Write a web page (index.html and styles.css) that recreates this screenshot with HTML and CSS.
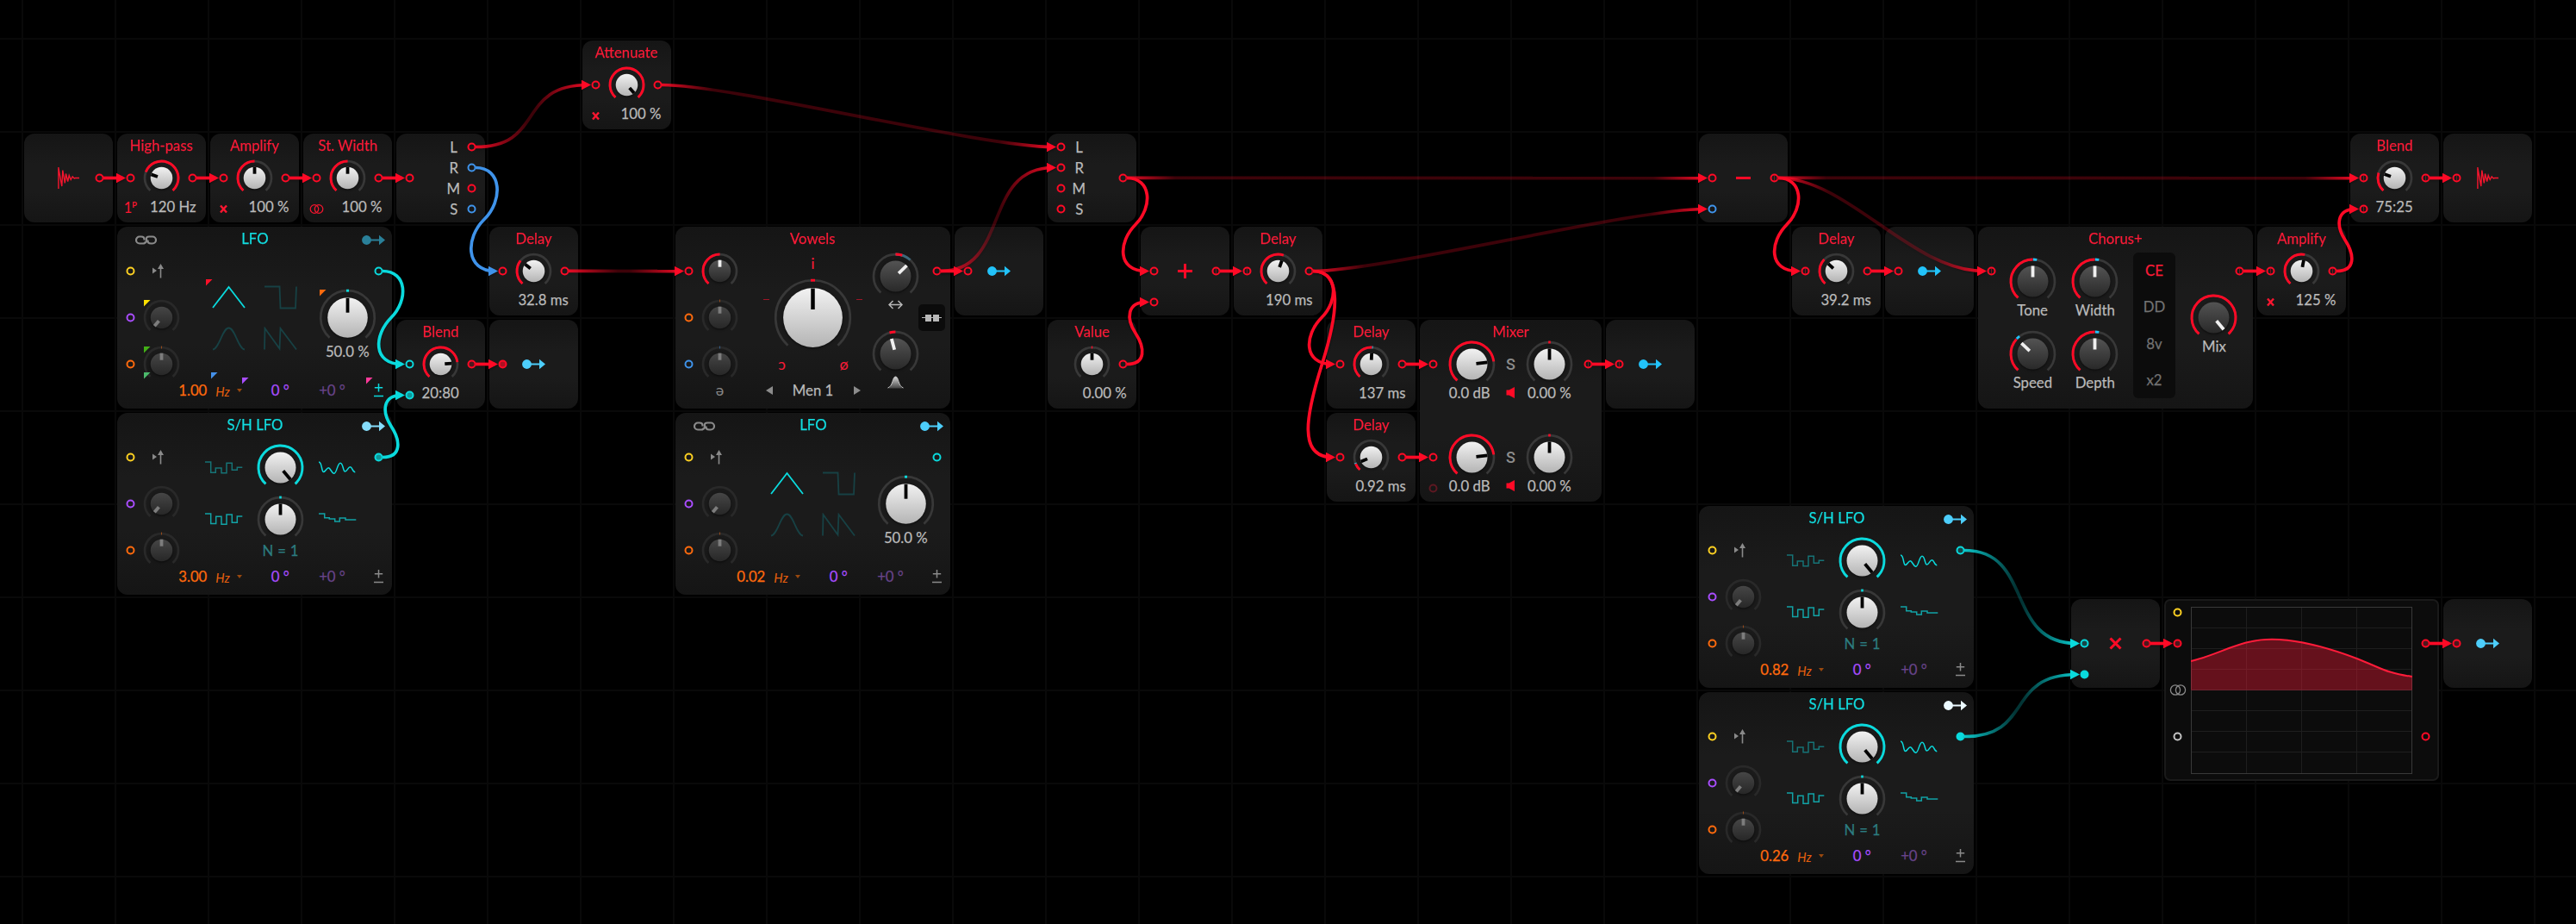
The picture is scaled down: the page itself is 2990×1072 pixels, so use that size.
FILE: index.html
```html
<!DOCTYPE html>
<html lang="en">
<head>
<meta charset="utf-8">
<title>Patch grid</title>
<link rel="stylesheet" href="styles.css">
</head>
<body>
<svg class="defs" aria-hidden="true">
  <defs>
    <linearGradient id="cap-light" x2="0" y2="1"><stop stop-color="#f2f2f2"/><stop offset="1" stop-color="#b4b4b4"/></linearGradient>
    <linearGradient id="cap-dark" x2="0" y2="1"><stop stop-color="#535353"/><stop offset="1" stop-color="#292929"/></linearGradient>
    <linearGradient id="cap-dim" x2="0" y2="1"><stop stop-color="#464646"/><stop offset="1" stop-color="#272727"/></linearGradient>
    <linearGradient id="bell-fill" x2="0" y2="1"><stop stop-color="#d8d8d8"/><stop offset="1" stop-color="#444"/></linearGradient>
  </defs>
  <symbol id="port" viewBox="-5.5 -5.5 11 11"><circle r="4" class="ring"/></symbol>
  <symbol id="port-stereo" viewBox="-5.5 -5.5 11 11"><circle r="4" class="ring"/><path d="M0-3V3" class="split"/></symbol>
  <symbol id="mod" viewBox="0 0 27 13"><circle cx="5.5" cy="6.5" r="5.4"/><path d="M8 5.4H20V.7L27 6.5L20 12.3V7.6H8Z"/></symbol>
  <symbol id="chain" viewBox="0 0 25 11"><path d="M10.5 5.5V4.5Q10.5 1.5 7 1.5H5A4 4 0 0 0 5 9.5H9Q11.5 9.5 11.5 7.5M14.5 5.5V6.5Q14.5 9.5 18 9.5H20A4 4 0 0 0 20 1.5H16Q12.5 1.5 13 4.5V5.5Q13 8.5 10.5 9.2"/></symbol>
  <symbol id="trigger" viewBox="0 0 29 19"><path d="M4 5.5V12.5L9 9Z"/><path d="M12.7 17.5V7H10L13.5 1L17 7H14.3V17.5Z"/></symbol>
  <symbol id="w-tri" viewBox="-1 -1 41 28"><path d="M1 25L19.5 1L38 25"/></symbol>
  <symbol id="w-sqr" viewBox="-1 -1 41 28"><path d="M1 .5H18.5L19.5 25.5H37L38 .5"/></symbol>
  <symbol id="w-sin" viewBox="-1 -1 41 28"><path d="M1 25.5C9 24 12 .5 19.5 .5S30 24 38 25.5"/></symbol>
  <symbol id="w-saw" viewBox="-1 -1 41 28"><path d="M1 25.5L1.5 1L18.5 24.5L19.5 1L38 25.5"/></symbol>
  <symbol id="w-hold" viewBox="-1 -1 45 15"><path d="M0 0H6.7V12.3H12.3V7H19V12.7H25V1.3H31.3V9.3H37.3V6.3H43.3"/></symbol>
  <symbol id="w-alt" viewBox="-1 -1 45 15"><path d="M0 0H6.7V11.5H12.7V3.3H19V12.3H25V1H31.3V10.3H37.3V3H43.3"/></symbol>
  <symbol id="w-smooth" viewBox="-1 -1 45 15"><path d="M0 0C4 0 3 11.5 5.5 11.5C8 11.5 9 6.7 11.3 6.7C13.5 6.7 15 13.3 17.7 13.3C21 13.3 21.5 1.2 25 1.2C28.5 1.2 28 11 30.5 11C33 11 34 5.7 36.5 5.7C39 5.7 39 11.7 42.3 11.7"/></symbol>
  <symbol id="w-decay" viewBox="-1 -1 45 15"><path d="M0 0H6.7V4.7H12.3V6H18.7V9H24.3V5H31V7H43.3"/></symbol>
  <symbol id="plusminus" viewBox="0 0 11 17"><path d="M5.5 1V10.5M.8 5.75H10.2M0 15.5H11"/></symbol>
  <symbol id="audio" viewBox="0 0 25 27"><path d="M.9 1V26M.9 2L4.8 23L5.8 4.5L8.3 19.5L9.5 8.5L11.7 17.5L13.2 10.5L15.2 15.5L17.2 12L19.2 14L20.5 13.5H25"/></symbol>
  <symbol id="cross" viewBox="-4.5 -5.5 9 11"><path d="M-3.5-4L3.5 4M3.5-4L-3.5 4"/></symbol>
  <symbol id="rings" viewBox="-10 -6.5 20 13"><ellipse cx="-3" rx="5.6" ry="5.7"/><ellipse cx="3" rx="5.6" ry="5.7"/></symbol>
  <symbol id="speaker" viewBox="0 0 11 13"><path d="M.5 3.5H3.5L10 0V13L3.5 9.5H.5Z"/></symbol>

  <symbol id="dial-s" viewBox="-21.5 -21.5 43 43"><path class="track" d="M-13.1 14.5A19.5 19.5 0 1 1 13.1 14.5"/><circle class="cap" r="12.8"/></symbol>
  <symbol id="dial-m" viewBox="-27.5 -27.5 55 55"><path class="track" d="M-17.1 19A25.5 25.5 0 1 1 17.1 19"/><circle class="cap" r="18"/></symbol>
  <symbol id="dial-l" viewBox="-33.5 -33.5 67 67"><path class="track" d="M-20.9 23.3A31.3 31.3 0 1 1 20.9 23.3"/><circle class="cap" r="23.3"/></symbol>
  <symbol id="dial-xl" viewBox="-45.5 -45.5 91 91"><path class="track" d="M-29 32.2A43.3 43.3 0 1 1 29 32.2"/><circle class="cap" r="34.4"/></symbol>
</svg>

<main class="canvas">

  <section class="node red" style="--col:0;--row:1">
    <svg class="audio x7 y7"><use href="#audio"/></svg>
    <svg class="port x13 y7"><use href="#port"/></svg>
  </section>

  <section class="node red" style="--col:1;--row:1">
    <h2>High-pass</h2>
    <svg class="port x1 y7"><use href="#port"/></svg>
    <svg class="dial s x7 y7" viewBox="-21.5 -21.5 43 43"><use href="#dial-s" x="-21.5" y="-21.5" width="43" height="43"/><circle class="arc" pathLength="360" stroke-dasharray="207 360" transform="rotate(-159)"/><path class="pin" d="M0-12.8v8" transform="rotate(-71)"/></svg>
    <svg class="port x13 y7"><use href="#port"/></svg>
    <span class="poles x1 y13">1<sup>P</sup></span>
    <span class="value">120 Hz</span>
  </section>

  <section class="node red" style="--col:2;--row:1">
    <h2>Amplify</h2>
    <svg class="port x1 y7"><use href="#port"/></svg>
    <svg class="dial s x7 y7" viewBox="-21.5 -21.5 43 43"><use href="#dial-s" x="-21.5" y="-21.5" width="43" height="43"/><circle class="arc" pathLength="360" stroke-dasharray="138 360" transform="rotate(132)"/><path class="pin" d="M0-12.8v8"/></svg>
    <svg class="port x13 y7"><use href="#port"/></svg>
    <svg class="cross x1 y13"><use href="#cross"/></svg>
    <span class="value">100 %</span>
  </section>

  <section class="node red" style="--col:3;--row:1">
    <h2>St. Width</h2>
    <svg class="port x1 y7"><use href="#port"/></svg>
    <svg class="dial s x7 y7" viewBox="-21.5 -21.5 43 43"><use href="#dial-s" x="-21.5" y="-21.5" width="43" height="43"/><circle class="arc" pathLength="360" stroke-dasharray="138 360" transform="rotate(132)"/><path class="pin" d="M0-12.8v8"/></svg>
    <svg class="port x13 y7"><use href="#port"/></svg>
    <svg class="rings x1 y13"><use href="#rings"/></svg>
    <span class="value">100 %</span>
  </section>

  <section class="node red" style="--col:4;--row:1">
    <svg class="port x1 y7"><use href="#port"/></svg>
    <span class="text x9 w3 y1">L</span><svg class="port x13 y1"><use href="#port"/></svg>
    <span class="text x9 w3 y5">R</span><svg class="port blue x13 y5"><use href="#port"/></svg>
    <span class="text x9 w3 y9">M</span><svg class="port x13 y9"><use href="#port"/></svg>
    <span class="text x9 w3 y13">S</span><svg class="port blue x13 y13"><use href="#port"/></svg>
  </section>

  <section class="node red" style="--col:6;--row:0">
    <h2>Attenuate</h2>
    <svg class="port x1 y7"><use href="#port"/></svg>
    <svg class="dial s x7 y7" viewBox="-21.5 -21.5 43 43"><use href="#dial-s" x="-21.5" y="-21.5" width="43" height="43"/><circle class="arc" pathLength="360" stroke-dasharray="276 360" transform="rotate(132)"/><path class="pin" d="M0-12.8v8" transform="rotate(138)"/></svg>
    <svg class="port x13 y7"><use href="#port"/></svg>
    <svg class="cross x1 y13"><use href="#cross"/></svg>
    <span class="value">100 %</span>
  </section>

  <section class="node red" style="--col:5;--row:2">
    <h2>Delay</h2>
    <svg class="port x1 y7"><use href="#port"/></svg>
    <svg class="dial s x7 y7" viewBox="-21.5 -21.5 43 43"><use href="#dial-s" x="-21.5" y="-21.5" width="43" height="43"/><circle class="arc" pathLength="360" stroke-dasharray="86 360" transform="rotate(132)"/><path class="pin" d="M0-12.8v8" transform="rotate(-52)"/></svg>
    <svg class="port x13 y7"><use href="#port"/></svg>
    <span class="value">32.8 ms</span>
  </section>

  <section class="node wide teal" style="--col:1;--row:2">
    <svg class="chain x4 y1"><use href="#chain"/></svg>
    <h2>LFO</h2>
    <svg class="mod m-faded x48 y1"><use href="#mod"/></svg>
    <svg class="port yellow x1 y7"><use href="#port"/></svg>
    <svg class="trigger x7 y7"><use href="#trigger"/></svg>
    <svg class="port x49 y7"><use href="#port"/></svg>
    <svg class="port purple x1 y16"><use href="#port"/></svg>
    <svg class="dial s dim x7 y16" viewBox="-21.5 -21.5 43 43"><use href="#dial-s" x="-21.5" y="-21.5" width="43" height="43"/><path class="pin" d="M0-12.8v8" transform="rotate(-140)"/></svg>
    <svg class="port orange x1 y25"><use href="#port"/></svg>
    <svg class="dial s dim orange x7 y25" viewBox="-21.5 -21.5 43 43"><use href="#dial-s" x="-21.5" y="-21.5" width="43" height="43"/><path class="tick" d="M0-21v3"/><path class="pin" d="M0-12.8v8"/></svg>
    <svg class="wave on x20 y12"><use href="#w-tri"/></svg>
    <svg class="wave x30 y12"><use href="#w-sqr"/></svg>
    <svg class="wave x20 y20"><use href="#w-sin"/></svg>
    <svg class="wave x30 y20"><use href="#w-saw"/></svg>
    <svg class="dial l x43 y16" viewBox="-33.5 -33.5 67 67"><use href="#dial-l" x="-33.5" y="-33.5" width="67" height="67"/><path class="mark" d="M-1.5-31.3h3"/><path class="pin" d="M0-22.8v17"/></svg>
    <span class="text x43 y22 h3">50.0 %</span>
    <span class="text orange x13 y30">1.00</span>
    <span class="unit x19 y30">Hz</span>
    <i class="drop x22 y30"></i>
    <span class="text purple x30 y30">0 °</span>
    <span class="text faint x40 y30">+0 °</span>
    <svg class="plusminus on x49 y30"><use href="#plusminus"/></svg>
    <svg class="badges" viewBox="0 0 319 211">
      <path fill="#ff1028" d="M103 61h7.500l-7.500 7.500z"/><path fill="#ffe100" d="M31 85h7.500l-7.500 7.500z"/>
      <path fill="#43b016" d="M31 139h7.500l-7.500 7.500z"/><path fill="#4cba6c" d="M31 169h7.500l-7.500 7.500z"/>
      <path fill="#ff6a0d" d="M235 73h7.500l-7.500 7.500z"/><path fill="#4490e8" d="M109 169h7.500l-7.500 7.500z"/>
      <path fill="#a94dff" d="M145 175h7.500l-7.500 7.500z"/><path fill="#ff3a9a" d="M289 175h7.500l-7.500 7.500z"/>
    </svg>
  </section>

  <section class="node wide teal" style="--col:1;--row:4">
    <h2>S/H LFO</h2>
    <svg class="mod m-pale x48 y1"><use href="#mod"/></svg>
    <svg class="port yellow x1 y7"><use href="#port"/></svg>
    <svg class="trigger x7 y7"><use href="#trigger"/></svg>
    <svg class="port half x49 y7"><use href="#port"/></svg>
    <svg class="port purple x1 y16"><use href="#port"/></svg>
    <svg class="dial s dim x7 y16" viewBox="-21.5 -21.5 43 43"><use href="#dial-s" x="-21.5" y="-21.5" width="43" height="43"/><path class="pin" d="M0-12.8v8" transform="rotate(-140)"/></svg>
    <svg class="port orange x1 y25"><use href="#port"/></svg>
    <svg class="dial s dim orange x7 y25" viewBox="-21.5 -21.5 43 43"><use href="#dial-s" x="-21.5" y="-21.5" width="43" height="43"/><path class="tick" d="M0-21v3"/><path class="pin" d="M0-12.8v8"/></svg>
    <svg class="step low x19 y9"><use href="#w-hold"/></svg>
    <svg class="step x41 y9 on"><use href="#w-smooth"/></svg>
    <svg class="step x19 y19"><use href="#w-alt"/></svg>
    <svg class="step x41 y19"><use href="#w-decay"/></svg>
    <svg class="dial m x30 y9" viewBox="-27.5 -27.5 55 55"><use href="#dial-m" x="-27.5" y="-27.5" width="55" height="55"/><circle class="arc" pathLength="360" stroke-dasharray="276 360" transform="rotate(132)"/><path class="pin" d="M0-18v13" transform="rotate(140)"/></svg>
    <svg class="dial m x30 y19" viewBox="-27.5 -27.5 55 55"><use href="#dial-m" x="-27.5" y="-27.5" width="55" height="55"/><path class="mark" d="M-1.3-25.5h2.6"/><path class="pin" d="M0-18v13"/></svg>
    <span class="text steps x30 y25">N = 1</span>
    <span class="text orange x13 y30">3.00</span>
    <span class="unit x19 y30">Hz</span>
    <i class="drop x22 y30"></i>
    <span class="text purple x30 y30">0 °</span>
    <span class="text faint x40 y30">+0 °</span>
    <svg class="plusminus x49 y30"><use href="#plusminus"/></svg>
  </section>

  <section class="node red" style="--col:4;--row:3">
    <h2>Blend</h2>
    <svg class="port teal x1 y7"><use href="#port"/></svg>
    <svg class="port teal half x1 y13"><use href="#port"/></svg>
    <svg class="dial s x7 y7" viewBox="-21.5 -21.5 43 43"><use href="#dial-s" x="-21.5" y="-21.5" width="43" height="43"/><circle class="arc" pathLength="360" stroke-dasharray="221 360" transform="rotate(132)"/><path class="pin" d="M0-12.8v8" transform="rotate(86)"/></svg>
    <svg class="port tint x13 y7"><use href="#port"/></svg>
    <span class="text x7 y12 h3">20:80</span>
  </section>

  <section class="node red" style="--col:5;--row:3">
    <svg class="port half x1 y7"><use href="#port"/></svg>
    <svg class="mod m-sky x7 y7"><use href="#mod"/></svg>
  </section>

  <section class="node wide red" style="--col:7;--row:2">
    <h2>Vowels</h2>
    <svg class="port x1 y7"><use href="#port"/></svg>
    <svg class="dial s dark x7 y7" viewBox="-21.5 -21.5 43 43"><use href="#dial-s" x="-21.5" y="-21.5" width="43" height="43"/><circle class="arc" pathLength="360" stroke-dasharray="138 360" transform="rotate(132)"/><path class="pin" d="M0-12.8v8"/></svg>
    <svg class="port orange x1 y16"><use href="#port"/></svg>
    <svg class="dial s dim orange x7 y16" viewBox="-21.5 -21.5 43 43"><use href="#dial-s" x="-21.5" y="-21.5" width="43" height="43"/><path class="tick" d="M0-21v3"/><path class="pin" d="M0-12.8v8"/></svg>
    <svg class="port blue x1 y25"><use href="#port"/></svg>
    <svg class="dial s dim blue x7 y25" viewBox="-21.5 -21.5 43 43"><use href="#dial-s" x="-21.5" y="-21.5" width="43" height="43"/><path class="tick" d="M0-21v3"/><path class="pin" d="M0-12.8v8"/></svg>
    <span class="vowel grey x7 y30">ə</span>
    <span class="vowel x25 y5 h3">i</span>
    <i class="dash x16 y12 h3"></i>
    <i class="dash x34 y12 h3"></i>
    <svg class="dial xl x25 y16" viewBox="-45.5 -45.5 91 91"><use href="#dial-xl" x="-45.5" y="-45.5" width="91" height="91"/><path class="mark" d="M-2.5-43.3h5"/><path class="pin" d="M0-34v24.5"/></svg>
    <span class="vowel x19 y25">ɔ</span>
    <span class="vowel x31 y25">ø</span>
    <i class="prev x16 w3 y30"></i>
    <span class="text x25 y30">Men 1</span>
    <i class="next x33 w3 y30"></i>
    <svg class="dial m dark x41 y8" viewBox="-27.5 -27.5 55 55"><use href="#dial-m" x="-27.5" y="-27.5" width="55" height="55"/><circle class="arc modulated" pathLength="360" stroke-dasharray="42 360" transform="rotate(-90)"/><circle class="arc" pathLength="360" stroke-dasharray="18 360" transform="rotate(-90)"/><path class="pin" d="M0-18v13" transform="rotate(46)"/></svg>
    <svg class="spread x41 y13 h3" viewBox="0 0 17 11"><path d="M5.5 1L1 5.5L5.5 10M11.5 1L16 5.5L11.5 10M2 5.5H15"/></svg>
    <svg class="dial m dark x41 y23" viewBox="-27.5 -27.5 55 55"><use href="#dial-m" x="-27.5" y="-27.5" width="55" height="55"/><circle class="arc" pathLength="360" stroke-dasharray="16 360" transform="rotate(-106)"/><path class="pin" d="M0-18v13" transform="rotate(-15)"/></svg>
    <svg class="bell x41 y28 h3" viewBox="0 0 19 15"><path d="M0 14.5C7 13.5 5.5 1 9.5 1S12 13.5 19 14.5Z" fill="url(#bell-fill)"/><path d="M.5 14C7 12 5.5 1 9.5 1S12 12 18.5 14" fill="none" stroke="#c8c8c8"/></svg>
    <svg class="port x49 y7"><use href="#port"/></svg>
    <span class="series x48 y16"><i></i><i></i></span>
  </section>

  <section class="node red" style="--col:10;--row:2">
    <svg class="port x1 y7"><use href="#port"/></svg>
    <svg class="mod x7 y7"><use href="#mod"/></svg>
  </section>

  <section class="node wide teal" style="--col:7;--row:4">
    <svg class="chain x4 y1"><use href="#chain"/></svg>
    <h2>LFO</h2>
    <svg class="mod m-sky x48 y1"><use href="#mod"/></svg>
    <svg class="port yellow x1 y7"><use href="#port"/></svg>
    <svg class="trigger x7 y7"><use href="#trigger"/></svg>
    <svg class="port x49 y7"><use href="#port"/></svg>
    <svg class="port purple x1 y16"><use href="#port"/></svg>
    <svg class="dial s dim x7 y16" viewBox="-21.5 -21.5 43 43"><use href="#dial-s" x="-21.5" y="-21.5" width="43" height="43"/><path class="pin" d="M0-12.8v8" transform="rotate(-140)"/></svg>
    <svg class="port orange x1 y25"><use href="#port"/></svg>
    <svg class="dial s dim orange x7 y25" viewBox="-21.5 -21.5 43 43"><use href="#dial-s" x="-21.5" y="-21.5" width="43" height="43"/><path class="tick" d="M0-21v3"/><path class="pin" d="M0-12.8v8"/></svg>
    <svg class="wave on x20 y12"><use href="#w-tri"/></svg>
    <svg class="wave x30 y12"><use href="#w-sqr"/></svg>
    <svg class="wave x20 y20"><use href="#w-sin"/></svg>
    <svg class="wave x30 y20"><use href="#w-saw"/></svg>
    <svg class="dial l x43 y16" viewBox="-33.5 -33.5 67 67"><use href="#dial-l" x="-33.5" y="-33.5" width="67" height="67"/><path class="mark" d="M-1.5-31.3h3"/><path class="pin" d="M0-22.8v17"/></svg>
    <span class="text x43 y22 h3">50.0 %</span>
    <span class="text orange x13 y30">0.02</span>
    <span class="unit x19 y30">Hz</span>
    <i class="drop x22 y30"></i>
    <span class="text purple x30 y30">0 °</span>
    <span class="text faint x40 y30">+0 °</span>
    <svg class="plusminus x49 y30"><use href="#plusminus"/></svg>
  </section>

  <section class="node red" style="--col:11;--row:1">
    <svg class="port x1 y1"><use href="#port"/></svg><span class="text x4 w3 y1">L</span>
    <svg class="port x1 y5"><use href="#port"/></svg><span class="text x4 w3 y5">R</span>
    <svg class="port x1 y9"><use href="#port"/></svg><span class="text x4 w3 y9">M</span>
    <svg class="port x1 y13"><use href="#port"/></svg><span class="text x4 w3 y13">S</span>
    <svg class="port x13 y7"><use href="#port"/></svg>
  </section>

  <section class="node red" style="--col:11;--row:3">
    <h2>Value</h2>
    <svg class="dial s x7 y7" viewBox="-21.5 -21.5 43 43"><use href="#dial-s" x="-21.5" y="-21.5" width="43" height="43"/><path class="mark" d="M-.7-19.5h1.4"/><path class="pin" d="M0-12.8v8"/></svg>
    <svg class="port x13 y7"><use href="#port"/></svg>
    <span class="value">0.00 %</span>
  </section>

  <section class="node red" style="--col:12;--row:2">
    <svg class="port x1 y7"><use href="#port"/></svg>
    <svg class="port x1 y13"><use href="#port"/></svg>
    <svg class="math x7 y7" viewBox="-8.5 -8.5 17 17"><path d="M-8.5 0H8.5M0-8.5V8.5"/></svg>
    <svg class="port x13 y7"><use href="#port-stereo"/></svg>
  </section>

  <section class="node red" style="--col:13;--row:2">
    <h2>Delay</h2>
    <svg class="port x1 y7"><use href="#port-stereo"/></svg>
    <svg class="dial s x7 y7" viewBox="-21.5 -21.5 43 43"><use href="#dial-s" x="-21.5" y="-21.5" width="43" height="43"/><circle class="arc" pathLength="360" stroke-dasharray="157 360" transform="rotate(132)"/><path class="pin" d="M0-12.8v8" transform="rotate(20)"/></svg>
    <svg class="port x13 y7"><use href="#port"/></svg>
    <span class="value">190 ms</span>
  </section>

  <section class="node red" style="--col:14;--row:3">
    <h2>Delay</h2>
    <svg class="port x1 y7"><use href="#port"/></svg>
    <svg class="dial s x7 y7" viewBox="-21.5 -21.5 43 43"><use href="#dial-s" x="-21.5" y="-21.5" width="43" height="43"/><circle class="arc" pathLength="360" stroke-dasharray="141 360" transform="rotate(132)"/><path class="mod-tick" d="M0-21v3" transform="rotate(5)"/><path class="pin" d="M0-12.8v8" transform="rotate(3)"/></svg>
    <svg class="port x13 y7"><use href="#port"/></svg>
    <span class="value">137 ms</span>
  </section>

  <section class="node red" style="--col:14;--row:4">
    <h2>Delay</h2>
    <svg class="port x1 y7"><use href="#port"/></svg>
    <svg class="dial s x7 y7" viewBox="-21.5 -21.5 43 43"><use href="#dial-s" x="-21.5" y="-21.5" width="43" height="43"/><circle class="arc" pathLength="360" stroke-dasharray="25 360" transform="rotate(132)"/><path class="mod-tick" d="M0-21v3" transform="rotate(-111)"/><path class="pin" d="M0-12.8v8" transform="rotate(-113)"/></svg>
    <svg class="port x13 y7"><use href="#port"/></svg>
    <span class="value">0.92 ms</span>
  </section>

  <section class="node square red" style="--col:15;--row:3">
    <h2>Mixer</h2>
    <svg class="port x1 y7"><use href="#port"/></svg>
    <svg class="dial m x8 w3 y7" viewBox="-27.5 -27.5 55 55"><use href="#dial-m" x="-27.5" y="-27.5" width="55" height="55"/><circle class="arc" pathLength="360" stroke-dasharray="221 360" transform="rotate(132)"/><path class="pin" d="M0-18v13" transform="rotate(83)"/></svg>
    <span class="solo x16 y7">S</span>
    <svg class="dial m x23 w3 y7" viewBox="-27.5 -27.5 55 55"><use href="#dial-m" x="-27.5" y="-27.5" width="55" height="55"/><path class="mark" d="M-1.3-25.5h2.6"/><path class="pin" d="M0-18v13"/></svg>
    <svg class="port x31 y7"><use href="#port-stereo"/></svg>
    <span class="text x8 y12 h3">0.0 dB</span>
    <svg class="speaker x16 y12 h3"><use href="#speaker"/></svg>
    <span class="text x23 w3 y12 h3">0.00 %</span>
    <svg class="port x1 y25"><use href="#port"/></svg>
    <svg class="dial m x8 w3 y25" viewBox="-27.5 -27.5 55 55"><use href="#dial-m" x="-27.5" y="-27.5" width="55" height="55"/><circle class="arc" pathLength="360" stroke-dasharray="221 360" transform="rotate(132)"/><path class="pin" d="M0-18v13" transform="rotate(83)"/></svg>
    <span class="solo x16 y25">S</span>
    <svg class="dial m x23 w3 y25" viewBox="-27.5 -27.5 55 55"><use href="#dial-m" x="-27.5" y="-27.5" width="55" height="55"/><path class="mark" d="M-1.3-25.5h2.6"/><path class="pin" d="M0-18v13"/></svg>
    <svg class="port spare x1 y31"><use href="#port"/></svg>
    <span class="text x8 y30 h3">0.0 dB</span>
    <svg class="speaker x16 y30 h3"><use href="#speaker"/></svg>
    <span class="text x23 w3 y30 h3">0.00 %</span>
  </section>

  <section class="node red" style="--col:17;--row:3">
    <svg class="port x1 y7"><use href="#port-stereo"/></svg>
    <svg class="mod x7 y7"><use href="#mod"/></svg>
  </section>

  <section class="node red" style="--col:18;--row:1">
    <svg class="port x1 y7"><use href="#port"/></svg>
    <svg class="port blue x1 y13"><use href="#port"/></svg>
    <svg class="math x7 y7" viewBox="-8.5 -8.5 17 17"><path d="M-8.5 0H8.5"/></svg>
    <svg class="port x13 y7"><use href="#port-stereo"/></svg>
  </section>

  <section class="node red" style="--col:19;--row:2">
    <h2>Delay</h2>
    <svg class="port x1 y7"><use href="#port-stereo"/></svg>
    <svg class="dial s x7 y7" viewBox="-21.5 -21.5 43 43"><use href="#dial-s" x="-21.5" y="-21.5" width="43" height="43"/><circle class="arc" pathLength="360" stroke-dasharray="92 360" transform="rotate(132)"/><path class="pin" d="M0-12.8v8" transform="rotate(-48)"/></svg>
    <svg class="port x13 y7"><use href="#port"/></svg>
    <span class="value">39.2 ms</span>
  </section>

  <section class="node red" style="--col:20;--row:2">
    <svg class="port x1 y7"><use href="#port"/></svg>
    <svg class="mod x7 y7"><use href="#mod"/></svg>
  </section>

  <section class="node wide red" style="--col:21;--row:2">
    <h2>Chorus+</h2>
    <svg class="port x1 y7"><use href="#port-stereo"/></svg>
    <svg class="dial m dark x9 y9" viewBox="-27.5 -27.5 55 55"><use href="#dial-m" x="-27.5" y="-27.5" width="55" height="55"/><circle class="arc" pathLength="360" stroke-dasharray="138 360" transform="rotate(132)"/><circle class="arc sky" pathLength="360" stroke-dasharray="10 360" transform="rotate(-89)"/><path class="pin" d="M0-18v13"/></svg>
    <span class="text x9 y14 h3">Tone</span>
    <svg class="dial m dark x21 y9" viewBox="-27.5 -27.5 55 55"><use href="#dial-m" x="-27.5" y="-27.5" width="55" height="55"/><circle class="arc" pathLength="360" stroke-dasharray="138 360" transform="rotate(132)"/><circle class="arc sky" pathLength="360" stroke-dasharray="10 360" transform="rotate(-89)"/><path class="pin" d="M0-18v13"/></svg>
    <span class="text x21 y14 h3">Width</span>
    <svg class="dial m dark x9 y23" viewBox="-27.5 -27.5 55 55"><use href="#dial-m" x="-27.5" y="-27.5" width="55" height="55"/><circle class="arc" pathLength="360" stroke-dasharray="90 360" transform="rotate(132)"/><circle class="arc sky" pathLength="360" stroke-dasharray="10 360" transform="rotate(-137)"/><path class="pin" d="M0-18v13" transform="rotate(-47)"/></svg>
    <span class="text x9 y28 h3">Speed</span>
    <svg class="dial m dark x21 y23" viewBox="-27.5 -27.5 55 55"><use href="#dial-m" x="-27.5" y="-27.5" width="55" height="55"/><circle class="arc" pathLength="360" stroke-dasharray="138 360" transform="rotate(132)"/><circle class="arc sky" pathLength="360" stroke-dasharray="10 360" transform="rotate(-89)"/><path class="pin" d="M0-18v13"/></svg>
    <span class="text x21 y28 h3">Depth</span>
    <ul class="modes x32 w3 y17 h3">
      <li class="active">CE</li>
      <li>DD</li>
      <li>8v</li>
      <li>x2</li>
    </ul>
    <svg class="dial m dark x44 y16" viewBox="-27.5 -27.5 55 55"><use href="#dial-m" x="-27.5" y="-27.5" width="55" height="55"/><circle class="arc" pathLength="360" stroke-dasharray="276 360" transform="rotate(132)"/><path class="pin" d="M0-18v13" transform="rotate(140)"/></svg>
    <span class="text x44 y21 h3">Mix</span>
    <svg class="port x49 y7"><use href="#port-stereo"/></svg>
  </section>

  <section class="node red" style="--col:24;--row:2">
    <h2>Amplify</h2>
    <svg class="port x1 y7"><use href="#port-stereo"/></svg>
    <svg class="dial s x7 y7" viewBox="-21.5 -21.5 43 43"><use href="#dial-s" x="-21.5" y="-21.5" width="43" height="43"/><circle class="arc" pathLength="360" stroke-dasharray="149 360" transform="rotate(132)"/><path class="pin" d="M0-12.8v8" transform="rotate(11)"/></svg>
    <svg class="port x13 y7"><use href="#port-stereo"/></svg>
    <svg class="cross x1 y13"><use href="#cross"/></svg>
    <span class="value">125 %</span>
  </section>

  <section class="node red" style="--col:25;--row:1">
    <h2>Blend</h2>
    <svg class="port x1 y7"><use href="#port-stereo"/></svg>
    <svg class="port x1 y13"><use href="#port-stereo"/></svg>
    <svg class="dial s x7 y7" viewBox="-21.5 -21.5 43 43"><use href="#dial-s" x="-21.5" y="-21.5" width="43" height="43"/><circle class="arc" pathLength="360" stroke-dasharray="66 360" transform="rotate(132)"/><path class="pin" d="M0-12.8v8" transform="rotate(-69)"/></svg>
    <svg class="port x13 y7"><use href="#port-stereo"/></svg>
    <span class="text x7 y12 h3">75:25</span>
  </section>

  <section class="node red" style="--col:26;--row:1">
    <svg class="port x1 y7"><use href="#port-stereo"/></svg>
    <svg class="audio x7 y7"><use href="#audio"/></svg>
  </section>

  <section class="node wide teal" style="--col:18;--row:5">
    <h2>S/H LFO</h2>
    <svg class="mod m-sky x48 y1"><use href="#mod"/></svg>
    <svg class="port yellow x1 y7"><use href="#port"/></svg>
    <svg class="trigger x7 y7"><use href="#trigger"/></svg>
    <svg class="port tint x49 y7"><use href="#port"/></svg>
    <svg class="port purple x1 y16"><use href="#port"/></svg>
    <svg class="dial s dim x7 y16" viewBox="-21.5 -21.5 43 43"><use href="#dial-s" x="-21.5" y="-21.5" width="43" height="43"/><path class="pin" d="M0-12.8v8" transform="rotate(-140)"/></svg>
    <svg class="port orange x1 y25"><use href="#port"/></svg>
    <svg class="dial s dim orange x7 y25" viewBox="-21.5 -21.5 43 43"><use href="#dial-s" x="-21.5" y="-21.5" width="43" height="43"/><path class="tick" d="M0-21v3"/><path class="pin" d="M0-12.8v8"/></svg>
    <svg class="step low x19 y9"><use href="#w-hold"/></svg>
    <svg class="step x41 y9 on"><use href="#w-smooth"/></svg>
    <svg class="step x19 y19"><use href="#w-alt"/></svg>
    <svg class="step x41 y19"><use href="#w-decay"/></svg>
    <svg class="dial m x30 y9" viewBox="-27.5 -27.5 55 55"><use href="#dial-m" x="-27.5" y="-27.5" width="55" height="55"/><circle class="arc" pathLength="360" stroke-dasharray="276 360" transform="rotate(132)"/><path class="pin" d="M0-18v13" transform="rotate(140)"/></svg>
    <svg class="dial m x30 y19" viewBox="-27.5 -27.5 55 55"><use href="#dial-m" x="-27.5" y="-27.5" width="55" height="55"/><path class="mark" d="M-1.3-25.5h2.6"/><path class="pin" d="M0-18v13"/></svg>
    <span class="text steps x30 y25">N = 1</span>
    <span class="text orange x13 y30">0.82</span>
    <span class="unit x19 y30">Hz</span>
    <i class="drop x22 y30"></i>
    <span class="text purple x30 y30">0 °</span>
    <span class="text faint x40 y30">+0 °</span>
    <svg class="plusminus x49 y30"><use href="#plusminus"/></svg>
  </section>

  <section class="node wide teal" style="--col:18;--row:7">
    <h2>S/H LFO</h2>
    <svg class="mod m-white x48 y1"><use href="#mod"/></svg>
    <svg class="port yellow x1 y7"><use href="#port"/></svg>
    <svg class="trigger x7 y7"><use href="#trigger"/></svg>
    <svg class="port full x49 y7"><use href="#port"/></svg>
    <svg class="port purple x1 y16"><use href="#port"/></svg>
    <svg class="dial s dim x7 y16" viewBox="-21.5 -21.5 43 43"><use href="#dial-s" x="-21.5" y="-21.5" width="43" height="43"/><path class="pin" d="M0-12.8v8" transform="rotate(-140)"/></svg>
    <svg class="port orange x1 y25"><use href="#port"/></svg>
    <svg class="dial s dim orange x7 y25" viewBox="-21.5 -21.5 43 43"><use href="#dial-s" x="-21.5" y="-21.5" width="43" height="43"/><path class="tick" d="M0-21v3"/><path class="pin" d="M0-12.8v8"/></svg>
    <svg class="step low x19 y9"><use href="#w-hold"/></svg>
    <svg class="step x41 y9 on"><use href="#w-smooth"/></svg>
    <svg class="step x19 y19"><use href="#w-alt"/></svg>
    <svg class="step x41 y19"><use href="#w-decay"/></svg>
    <svg class="dial m x30 y9" viewBox="-27.5 -27.5 55 55"><use href="#dial-m" x="-27.5" y="-27.5" width="55" height="55"/><circle class="arc" pathLength="360" stroke-dasharray="276 360" transform="rotate(132)"/><path class="pin" d="M0-18v13" transform="rotate(140)"/></svg>
    <svg class="dial m x30 y19" viewBox="-27.5 -27.5 55 55"><use href="#dial-m" x="-27.5" y="-27.5" width="55" height="55"/><path class="mark" d="M-1.3-25.5h2.6"/><path class="pin" d="M0-18v13"/></svg>
    <span class="text steps x30 y25">N = 1</span>
    <span class="text orange x13 y30">0.26</span>
    <span class="unit x19 y30">Hz</span>
    <i class="drop x22 y30"></i>
    <span class="text purple x30 y30">0 °</span>
    <span class="text faint x40 y30">+0 °</span>
    <svg class="plusminus x49 y30"><use href="#plusminus"/></svg>
  </section>

  <section class="node red" style="--col:22;--row:6">
    <svg class="port teal tint x1 y7"><use href="#port"/></svg>
    <svg class="port teal full x1 y13"><use href="#port"/></svg>
    <svg class="math x7 y7" viewBox="-8.5 -8.5 17 17"><path d="M-6-6L6 6M6-6L-6 6"/></svg>
    <svg class="port tint x13 y7"><use href="#port"/></svg>
  </section>

  <section class="node wide scope red" style="--col:23;--row:6">
    <svg class="port yellow x1 y1"><use href="#port"/></svg>
    <svg class="port tint x1 y7"><use href="#port"/></svg>
    <svg class="rings large x1 y16"><use href="#rings"/></svg>
    <svg class="port white x1 y25"><use href="#port"/></svg>
    <svg class="plot x25 y16" viewBox="0 0 257 194">
      <path class="lines" d="M64.5 0V194M128.5 0V194M192.5 0V194M0 24.5H257M0 48.5H257M0 72.5H257M0 120.5H257M0 144.5H257M0 168.5H257"/>
      <rect class="frame" x=".5" y=".5" width="256" height="193"/>
      <path class="fill" d="M0 63C26 57 46 45 70 40.3C84 37 95 37 112 38.8C140 42 170 51.5 192.5 60C212 67.5 220 72.5 232 75.8C242 79 250 80 257 81V96.5H0Z"/>
      <path class="zero" d="M0 96.5H257"/>
      <path class="curve" d="M0 63C26 57 46 45 70 40.3C84 37 95 37 112 38.8C140 42 170 51.5 192.5 60C212 67.5 220 72.5 232 75.8C242 79 250 80 257 81"/>
    </svg>
    <svg class="port tint x49 y7"><use href="#port"/></svg>
    <svg class="port x49 y25"><use href="#port"/></svg>
  </section>

  <section class="node red" style="--col:26;--row:6">
    <svg class="port tint x1 y7"><use href="#port"/></svg>
    <svg class="mod m-sky x7 y7"><use href="#mod"/></svg>
  </section>

  <svg class="wires" viewBox="0 0 2990 1072">
    <defs>
      <marker id="tip-red" markerUnits="userSpaceOnUse" markerWidth="12" markerHeight="12" refX="7.5" refY="6" orient="0"><path d="M0 .3L11 6L0 11.7Z" fill="#ff0a26"/></marker>
      <marker id="tip-teal" markerUnits="userSpaceOnUse" markerWidth="12" markerHeight="12" refX="7.5" refY="6" orient="0"><path d="M0 .3L11 6L0 11.7Z" fill="#0adadd"/></marker>
      <marker id="tip-blue" markerUnits="userSpaceOnUse" markerWidth="12" markerHeight="12" refX="7.5" refY="6" orient="0"><path d="M0 .3L11 6L0 11.7Z" fill="#3f93ea"/></marker>
      <linearGradient id="f-att-in" gradientUnits="userSpaceOnUse" x1="547" y1="0" x2="685" y2="0"><stop class="e"/><stop class="c" offset=".47"/><stop class="c" offset=".53"/><stop class="e" offset="1"/></linearGradient>
      <linearGradient id="f-att-out" gradientUnits="userSpaceOnUse" x1="763" y1="0" x2="1224" y2="0"><stop class="e"/><stop class="c" offset=".14"/><stop class="c" offset=".86"/><stop class="e" offset="1"/></linearGradient>
      <linearGradient id="f-delay" gradientUnits="userSpaceOnUse" x1="655" y1="0" x2="793" y2="0"><stop class="e"/><stop class="c" offset=".45"/><stop class="c" offset=".55"/><stop class="e" offset="1"/></linearGradient>
      <linearGradient id="f-vowels" gradientUnits="userSpaceOnUse" x1="1087" y1="0" x2="1224" y2="0"><stop class="e"/><stop class="c" offset=".47"/><stop class="c" offset=".53"/><stop class="e" offset="1"/></linearGradient>
      <linearGradient id="f-merge" gradientUnits="userSpaceOnUse" x1="1303" y1="0" x2="1980" y2="0"><stop class="e"/><stop class="c" offset=".09"/><stop class="c" offset=".91"/><stop class="e" offset="1"/></linearGradient>
      <linearGradient id="f-sub" gradientUnits="userSpaceOnUse" x1="1519" y1="0" x2="1980" y2="0"><stop class="e"/><stop class="c" offset=".14"/><stop class="c" offset=".86"/><stop class="e" offset="1"/></linearGradient>
      <linearGradient id="f-dry" gradientUnits="userSpaceOnUse" x1="2059" y1="0" x2="2736" y2="0"><stop class="e"/><stop class="c" offset=".09"/><stop class="c" offset=".91"/><stop class="e" offset="1"/></linearGradient>
      <linearGradient id="f-chorus" gradientUnits="userSpaceOnUse" x1="2059" y1="0" x2="2304" y2="0"><stop class="e"/><stop class="c" offset=".26"/><stop class="c" offset=".74"/><stop class="e" offset="1"/></linearGradient>
      <linearGradient id="f-mult" gradientUnits="userSpaceOnUse" x1="2275" y1="0" x2="2412" y2="0"><stop class="te"/><stop class="tc" offset=".47"/><stop class="tc" offset=".53"/><stop class="te" offset="1"/></linearGradient>
    </defs>
    <g marker-end="url(#tip-red)">
      <path stroke="url(#f-att-in)" d="M552 170.5C633 170.5 599 98.5 682.5 98.5"/>
      <path stroke="url(#f-att-out)" d="M768 98.5C850 98.5 1138 170.5 1222.5 170.5"/>
      <path stroke="url(#f-delay)" d="M660 314.4L790.5 314.6"/>
      <path stroke="url(#f-vowels)" d="M1092 314.5C1173 314.5 1139 194.5 1222.5 194.5"/>
      <path stroke="url(#f-merge)" d="M1308 206.4L1978.5 206.6"/>
      <path stroke="url(#f-sub)" d="M1524 314.5C1606 314.5 1894 242.5 1978.5 242.5"/>
      <path stroke="url(#f-dry)" d="M2064 206.4L2734.5 206.6"/>
      <path stroke="url(#f-chorus)" d="M2064 206.5C2145 206.5 2218 314.5 2302.5 314.5"/>
    </g>
    <g stroke="#0adadd" marker-end="url(#tip-teal)">
      <path stroke="url(#f-mult)" d="M2280 638.5C2361 638.5 2327 746.5 2410.5 746.5"/>
      <path stroke="url(#f-mult)" d="M2280 854.5C2361 854.5 2327 782.5 2410.5 782.5"/>
      <path d="M444 314.5C473 314.5 474 348.5 454 368.5S432 422.5 466.5 422.5"/>
      <path d="M444 530.5C466.5 530.5 465 511.5 454 494.5S444 458.5 466.5 458.5"/>
    </g>
    <path stroke="#3f93ea" marker-end="url(#tip-blue)" d="M552 194.5C583 194.5 584 233 562 254.5S540 314.5 574.5 314.5"/>
    <g stroke="#ff0a26" marker-end="url(#tip-red)">
      <path d="M120 206.5H142.5"/><path d="M228 206.5H250.5"/><path d="M336 206.5H358.5"/><path d="M444 206.5H466.5"/>
      <path d="M552 422.5H574.5"/><path d="M1092 314.5H1114.5"/>
      <path d="M1308 206.5C1337 206.5 1338 240.5 1318 260.5S1296 314.5 1330.5 314.5"/>
      <path d="M1308 422.5C1330.5 422.5 1329 403.5 1318 386.5S1308 350.5 1330.5 350.5"/>
      <path d="M1416 314.5H1438.5"/>
      <path d="M1524 314.5C1559 314.5 1553 364 1534.5 422.5S1506 530.5 1546.5 530.5"/>
      <path d="M1524 314.5C1553 314.5 1554 348.5 1534 368.5S1512 422.5 1546.5 422.5"/>
      <path d="M1632 422.5H1654.5"/><path d="M1632 530.5H1654.5"/><path d="M1848 422.5H1870.5"/>
      <path d="M2064 206.5C2093 206.5 2094 240.5 2074 260.5S2052 314.5 2086.5 314.5"/>
      <path d="M2172 314.5H2194.5"/><path d="M2604 314.5H2626.5"/>
      <path d="M2712 314.5C2734.5 314.5 2733 295.5 2722 278.5S2712 242.5 2734.5 242.5"/>
      <path d="M2820 206.5H2842.5"/><path d="M2496 746.5H2518.5"/><path d="M2820 746.5H2842.5"/>
    </g>
  </svg>
</main>
</body>
</html>
```
FILE: styles.css
```css
:root {
  --red: #ff0a26;
  --teal: #0adadd;
  --blue: #3f93ea;
  --orange: #ff6a0d;
  --purple: #a94dff;
  --yellow: #fdd022;
  --label: #bababa;
}

* { box-sizing: border-box; }

html { height: 1072px; overflow: hidden; }

body {
  margin: 0;
  background: #000;
  font-family: Lato, Carlito, "Noto Sans", sans-serif;
  font-size: 18px;
  line-height: 22px;
}

.defs { position: absolute; width: 0; height: 0; }

.canvas {
  position: relative;
  width: 2990px;
  height: 1072px;
  overflow: hidden;
  background-image:
    linear-gradient(90deg, #090909 2px, transparent 2px),
    linear-gradient(#090909 2px, transparent 2px);
  background-size: 108px 108px;
  background-position: 25px 0, 0 44px;
}

/* A node snaps to the 108px canvas grid; inside, it has a 6px grid of its own. */
.node {
  position: absolute;
  left: calc(28px + var(--col) * 108px);
  top: calc(47px + var(--row) * 108px);
  width: 103px;
  height: 103px;
  padding: 9.5px;
  display: grid;
  grid-template-columns: repeat(auto-fill, 6px);
  grid-template-rows: repeat(auto-fill, 6px);
  border-radius: 12px;
  background: linear-gradient(#151515, #1b1b1b 35%, #1b1b1b 65%, #151515);
}
.node.wide { width: 319px; height: 211px; }
.node.square { width: 211px; height: 211px; }
.node.scope { background: #0c0c0c; border: 2px solid #1a1a1a; border-radius: 7px; padding: 7.5px; }

.node > * {
  grid-column-end: span 2;
  grid-row-end: span 2;
  place-self: center;
  white-space: nowrap;
}
.x1 { grid-column-start: 1; }
.x4 { grid-column-start: 4; }
.x7 { grid-column-start: 7; }
.x8 { grid-column-start: 8; }
.x9 { grid-column-start: 9; }
.x13 { grid-column-start: 13; }
.x16 { grid-column-start: 16; }
.x19 { grid-column-start: 19; }
.x20 { grid-column-start: 20; }
.x21 { grid-column-start: 21; }
.x22 { grid-column-start: 22; }
.x23 { grid-column-start: 23; }
.x25 { grid-column-start: 25; }
.x30 { grid-column-start: 30; }
.x31 { grid-column-start: 31; }
.x32 { grid-column-start: 32; }
.x33 { grid-column-start: 33; }
.x34 { grid-column-start: 34; }
.x40 { grid-column-start: 40; }
.x41 { grid-column-start: 41; }
.x43 { grid-column-start: 43; }
.x44 { grid-column-start: 44; }
.x48 { grid-column-start: 48; }
.x49 { grid-column-start: 49; }
.y1 { grid-row-start: 1; }
.y5 { grid-row-start: 5; }
.y7 { grid-row-start: 7; }
.y8 { grid-row-start: 8; }
.y9 { grid-row-start: 9; }
.y12 { grid-row-start: 12; }
.y13 { grid-row-start: 13; }
.y14 { grid-row-start: 14; }
.y16 { grid-row-start: 16; }
.y17 { grid-row-start: 17; }
.y19 { grid-row-start: 19; }
.y20 { grid-row-start: 20; }
.y21 { grid-row-start: 21; }
.y22 { grid-row-start: 22; }
.y23 { grid-row-start: 23; }
.y25 { grid-row-start: 25; }
.y28 { grid-row-start: 28; }
.y30 { grid-row-start: 30; }
.y31 { grid-row-start: 31; }
.node > .w3 { grid-column-end: span 3; }
.node > .h3 { grid-row-end: span 3; }

.red { --tone: var(--red); --title: #fa1b37; }
.teal { --tone: var(--teal); --title: #12dde0; }
.blue { --tone: var(--blue); }
.orange { --tone: var(--orange); }
.purple { --tone: var(--purple); }
.yellow { --tone: var(--yellow); }
.white { --tone: #c4c4c4; }
.spare { --tone: #5e1822; }

/* Text */
.node > h2 {
  grid-column: 1 / -1;
  grid-row: 1 / span 1;
  margin: 0;
  font-size: 18px;
  font-weight: 400;
  color: var(--title);
  transform: scaleX(.93);
}
h2, .text, .value, .modes li { -webkit-text-stroke: .25px currentColor; }
.text { color: var(--label); transform: translateY(-1px) scaleX(.93); }
.text.orange, .text.purple { color: var(--tone); }
.text.faint { color: #68448a; }
.text.steps { color: #2c7c80; letter-spacing: .3px; }
.node > .value {
  grid-column: 13 / span 2;
  grid-row: 12 / span 3;
  justify-self: end;
  margin-right: 2px;
  color: var(--label);
  transform: translateY(-1px) scaleX(.93);
  transform-origin: right;
}
.unit { font-size: 16px; font-style: italic; color: #e8600d; transform: translate(-1.5px, 1px) scaleX(.91); }
.poles { color: #ff1630; transform: translateY(-3px) scaleX(.91); }
.poles sup { font-size: 10px; font-weight: 700; line-height: 0; vertical-align: 6px; }
.solo { color: #8c8c8c; font-family: Roboto, sans-serif; font-weight: 500; font-size: 18px; }
.vowel { color: #fa1b37; transform: translateY(-1px); }
.vowel.grey { color: #858585; }

/* Ports */
.port { width: 11px; height: 11px; color: transparent; }
.ring { fill: currentColor; stroke: var(--tone); stroke-width: 2; }
.split { stroke: var(--tone); stroke-width: 1; opacity: .45; }
.port.half { color: color-mix(in srgb, var(--tone) 65%, #1b1b1b); }
.port.tint { color: color-mix(in srgb, var(--tone) 22%, #1b1b1b); }
.port.full { color: var(--tone); }

/* Dials */
.dial { overflow: visible; }
.dial.s { width: 43px; height: 43px; --r: 19.5px; }
.dial.m { width: 55px; height: 55px; --r: 25.5px; }
.dial.l { width: 67px; height: 67px; }
.dial.xl { width: 91px; height: 91px; }
.dial { --cap: url(#cap-light); --pin: #000; --track: #383838; }
.dial.dark { --cap: url(#cap-dark); --pin: #f0f0f0; }
.dial.dim { --cap: url(#cap-dim); --pin: #7d7d7d; --track: #292929; }
.track { fill: none; stroke: var(--track); stroke-width: 2.7; }
.cap { fill: var(--cap); filter: drop-shadow(0 1px 1.5px #0009); }
.arc { r: var(--r); fill: none; stroke: var(--tone); stroke-width: 2.9; }
.arc.sky { stroke: #22c3fa; }
.arc.modulated { stroke: #3d687b; }
.mark { stroke: var(--tone); stroke-width: 2.9; }
.tick { stroke: var(--tone); stroke-width: 1; opacity: .5; }
.mod-tick { stroke: #3fa9c9; stroke-width: 1; }
.pin { stroke: var(--pin); stroke-width: 3.8; }
.dial.xl .pin { stroke-width: 4.5; }

/* Icons */
.mod { width: 27px; height: 13px; fill: #22c3fa; }
.mod.m-faded { fill: #2a8099; }
.mod.m-pale { fill: #86ddfb; }
.mod.m-sky { fill: #4dcefb; }
.mod.m-white { fill: #ebf9ff; }
.chain { width: 25px; height: 11px; fill: none; stroke: #8a8a8a; stroke-width: 2.2; }
.trigger { width: 29px; height: 19px; fill: #8a8a8a; }
.wave { width: 41px; height: 28px; fill: none; stroke: #174144; stroke-width: 1.8; }
.wave.on { stroke: var(--tone); }
.step { width: 45px; height: 15px; fill: none; stroke: #12a3a6; stroke-width: 1.5; }
.step.low { stroke: #167376; }
.step.on { stroke: var(--tone); }
.plusminus { width: 11px; height: 17px; fill: none; stroke: #8a8a8a; stroke-width: 1.5; }
.plusminus.on { stroke: var(--tone); }
.audio { width: 25px; height: 27px; fill: none; stroke: #f5152e; stroke-width: 1.4; }
.cross { width: 9px; height: 11px; fill: none; stroke: #ff1630; stroke-width: 2.4; }
.rings { width: 17px; height: 11px; fill: none; stroke: #f5152e; stroke-width: 1.5; }
.rings.large { width: 20px; height: 13px; stroke: #8a8a8a; stroke-width: 1.3; }
.math { width: 17px; height: 17px; stroke: var(--tone); stroke-width: 3; }
.speaker { width: 11px; height: 13px; fill: var(--tone); }
.spread { width: 17px; height: 11px; fill: none; stroke: #b8b8b8; stroke-width: 1.5; }
.bell { width: 19px; height: 15px; }
.drop { border: 3.5px solid transparent; border-top: 4px solid #98480f; border-bottom: 0; }
.dash { width: 7px; height: 1px; background: #a01526; }
.prev, .next { border: 5px solid transparent; }
.prev { border-right: 8px solid #8c8c8c; border-left: 0; }
.next { border-left: 8px solid #8c8c8c; border-right: 0; }

.series {
  width: 31px;
  height: 31px;
  display: flex;
  align-items: center;
  justify-content: center;
  gap: 2px;
  border-radius: 5px;
  background: linear-gradient(#b8b8b8, #b8b8b8) center / 23px 1px no-repeat #0b0b0b;
}
.series i { width: 7px; height: 8px; background: #b8b8b8; }

.modes {
  width: 49px;
  height: 169px;
  margin: 0;
  padding: 0;
  display: flex;
  flex-direction: column;
  list-style: none;
  border-radius: 6px;
  background: #0c0c0c;
  color: #727272;
}
.modes li { flex: 1; display: grid; place-content: center; transform: translateY(-1px) scaleX(.93); }
.modes .active { color: #fa1b37; }

/* Scope */
.plot { width: 257px; height: 194px; }
.plot path, .plot rect { fill: none; }
.plot .lines { stroke: #1e1e1e; }
.plot .frame { stroke: #393939; }
.plot .fill { fill: #ff1c3a5e; }
.plot .zero { stroke: #6d2530; }
.plot .curve { stroke: #ff1c3a; stroke-width: 2; }

/* Parameter badges lie over the node's controls */
.node > .badges { position: absolute; inset: 0; width: 100%; height: 100%; }

/* Wires lie over the nodes */
.wires {
  position: absolute;
  inset: 0;
  width: 2990px;
  height: 1072px;
  fill: none;
  stroke-width: 3.7;
  pointer-events: none;
}
.wires g, .wires > path { filter: drop-shadow(0 1px 1px #0006); }
.e { stop-color: var(--red); stop-opacity: .95; }
.c { stop-color: var(--red); stop-opacity: .24; }
.te { stop-color: var(--teal); stop-opacity: .95; }
.tc { stop-color: var(--teal); stop-opacity: .24; }
```
